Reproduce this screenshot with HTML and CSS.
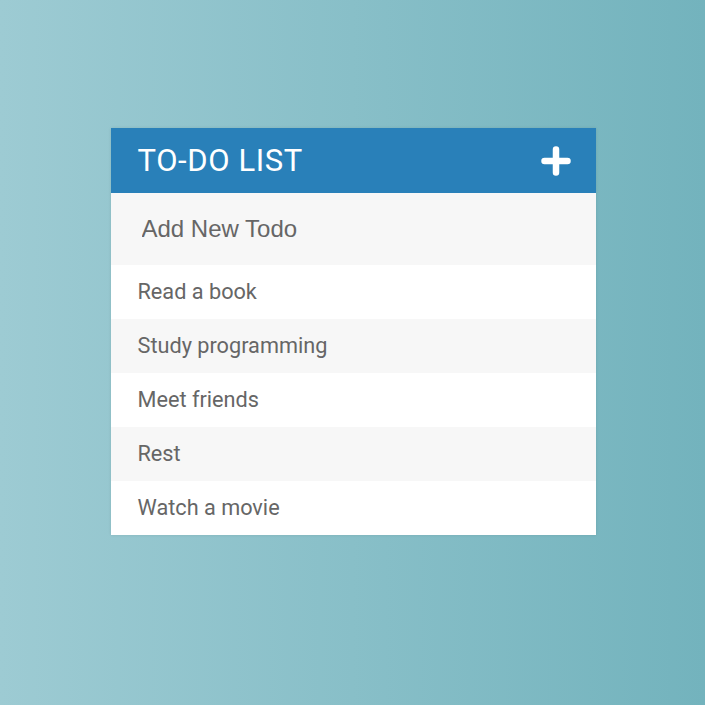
FILE: index.html
```html
<!DOCTYPE html>
<html>
<head>
<meta charset="utf-8">
<link rel="stylesheet" href="styles.css">
</head>
<body>
<div class="page">
  <div class="card">
    <div class="header">
      <h1 class="title">TO-DO LIST</h1>
      <svg class="plus" width="30" height="30" viewBox="0 0 30 30"><path d="M15 3.5V26.5M3.5 15H26.5" stroke="#fff" stroke-width="6.5" stroke-linecap="round"/></svg>
    </div>
    <input class="new-todo" type="text" placeholder="Add New Todo">
    <ul class="list">
      <li class="item">Read a book</li>
      <li class="item">Study programming</li>
      <li class="item">Meet friends</li>
      <li class="item">Rest</li>
      <li class="item">Watch a movie</li>
    </ul>
  </div>
</div>
</body>
</html>
```
FILE: styles.css
```css
html, body { margin: 0; padding: 0; }
body {
  width: 705px; height: 705px;
  background: linear-gradient(to right, #9dcbd3, #73b3bd);
  font-family: Roboto, "Liberation Sans", sans-serif;
}
.page { display: flex; justify-content: center; padding-top: 128px; }
.card {
  width: 485px;
  margin-left: 1px;
  background: #fff;
  box-shadow: 0 0 3px rgba(0,0,0,0.1);
}
.header {
  height: 65px;
  background: #2980b9;
  display: flex; align-items: center; justify-content: space-between;
  padding: 0 25px 0 27px;
}
.title { margin: 0; font-weight: 400; font-size: 31px; color: #fff; letter-spacing: 0.6px; }
.plus { display: block; }
.new-todo {
  display: block; box-sizing: border-box; width: 100%; height: 72px;
  border: none; outline: none; background: #f7f7f7;
  padding: 0 0 0 31px;
  font-family: "Liberation Sans", Arial, sans-serif; font-size: 24px; color: #666;
}
.new-todo::placeholder { color: #666; }
.list { list-style: none; margin: 0; padding: 0; }
.item {
  box-sizing: border-box;
  height: 54px; display: flex; align-items: center; padding: 0 0 2px 27px;
  font-size: 21.7px; color: #666;
}
.item:nth-child(even) { background: #f7f7f7; }
```
